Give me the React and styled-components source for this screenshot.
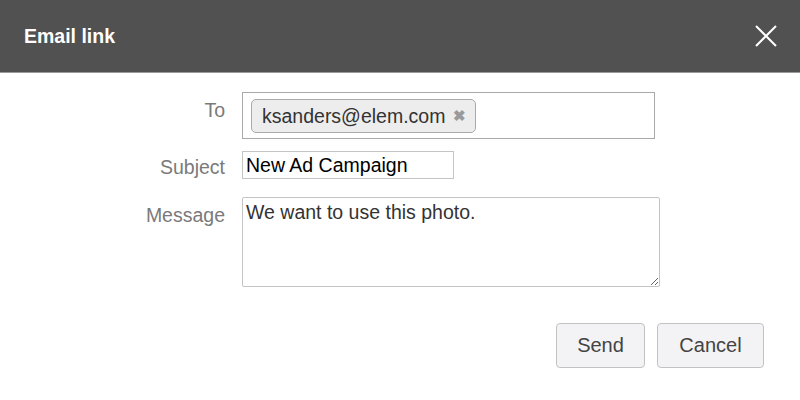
import React from 'react'
import styled, { createGlobalStyle } from 'styled-components'

const GlobalStyle = createGlobalStyle`
  html, body {
    margin: 0;
    padding: 0;
    background: #ffffff;
    font-family: "Liberation Sans", Arial, sans-serif;
  }
`

const Dialog = styled.div`
  width: 800px;
  height: 400px;
  background: #ffffff;
  overflow: hidden;
`

const Header = styled.div`
  height: 73px;
  background: #515151;
  border-bottom: 1px solid #9a9a9a;
  display: flex;
  align-items: center;
  justify-content: space-between;
  padding: 0 22px 0 24px;
  box-sizing: border-box;
`

const Title = styled.h1`
  margin: 0;
  font-size: 19.5px;
  font-weight: bold;
  color: #ffffff;
`

const Close = styled.button`
  border: 0;
  background: none;
  padding: 0;
  width: 24px;
  height: 24px;
  display: flex;
  cursor: pointer;
`

const Form = styled.div`
  display: grid;
  grid-template-columns: 225px auto;
  column-gap: 17px;
  row-gap: 12px;
  padding: 19px 0 0;
  align-items: start;
`

const Label = styled.label`
  text-align: right;
  color: #7a7a7a;
  font-size: 19.5px;
  line-height: 22px;
  padding-top: ${(p) => p.$top}px;
  margin-top: ${(p) => p.$gap || 0}px;
`

const ToBox = styled.div`
  width: 413px;
  height: 47px;
  box-sizing: border-box;
  border: 1px solid #a9a9a9;
  padding: 6px 8px;
  display: flex;
  align-items: flex-start;
`

const Chip = styled.span`
  height: 34px;
  box-sizing: border-box;
  display: inline-flex;
  align-items: center;
  gap: 8px;
  padding: 0 9px 0 10px;
  border: 1px solid #a9a9a9;
  border-radius: 5px;
  background: #ededed;
  color: #333333;
  font-size: 19.5px;
`

const ChipX = styled.span`
  color: #9a9a9a;
  font-size: 15px;
  font-weight: bold;
`

const TextInput = styled.input`
  width: 212px;
  height: 28px;
  box-sizing: border-box;
  border: 1px solid #c4c4c4;
  padding: 0 3px;
  font-family: "Liberation Sans", Arial, sans-serif;
  font-size: 19.5px;
  color: #000000;
  outline: none;
`

const Message = styled.textarea`
  width: 418px;
  height: 90px;
  margin: 6px 0 0;
  box-sizing: border-box;
  border: 1px solid #c4c4c4;
  border-radius: 2px;
  padding: 2px 3px;
  font-family: "Liberation Sans", Arial, sans-serif;
  font-size: 19.5px;
  line-height: 24px;
  color: #333333;
  outline: none;
  resize: both;
`

const Actions = styled.div`
  display: flex;
  justify-content: flex-end;
  gap: 12px;
  padding: 36px 36px 0 0;
`

const Button = styled.button`
  height: 45px;
  min-width: ${(p) => p.$w}px;
  box-sizing: border-box;
  border: 1px solid #c2c2c2;
  border-radius: 4px;
  background: #f3f3f5;
  color: #444444;
  font-family: "Liberation Sans", Arial, sans-serif;
  font-size: 20px;
  padding: 0 18px;
`

export default function App() {
  return (
    <Dialog>
      <GlobalStyle />
      <Header>
        <Title>Email link</Title>
        <Close aria-label="Close">
          <svg width="24" height="24" viewBox="0 0 24 24">
            <path d="M2 2 L22 22 M22 2 L2 22" stroke="#ffffff" strokeWidth="2" />
          </svg>
        </Close>
      </Header>
      <Form>
        <Label $top={7}>To</Label>
        <ToBox>
          <Chip>
            ksanders@elem.com <ChipX>✖</ChipX>
          </Chip>
        </ToBox>
        <Label $top={5}>Subject</Label>
        <TextInput defaultValue="New Ad Campaign" />
        <Label $top={7} $gap={6}>Message</Label>
        <Message defaultValue="We want to use this photo." />
      </Form>
      <Actions>
        <Button $w={89}>Send</Button>
        <Button $w={107}>Cancel</Button>
      </Actions>
    </Dialog>
  )
}
